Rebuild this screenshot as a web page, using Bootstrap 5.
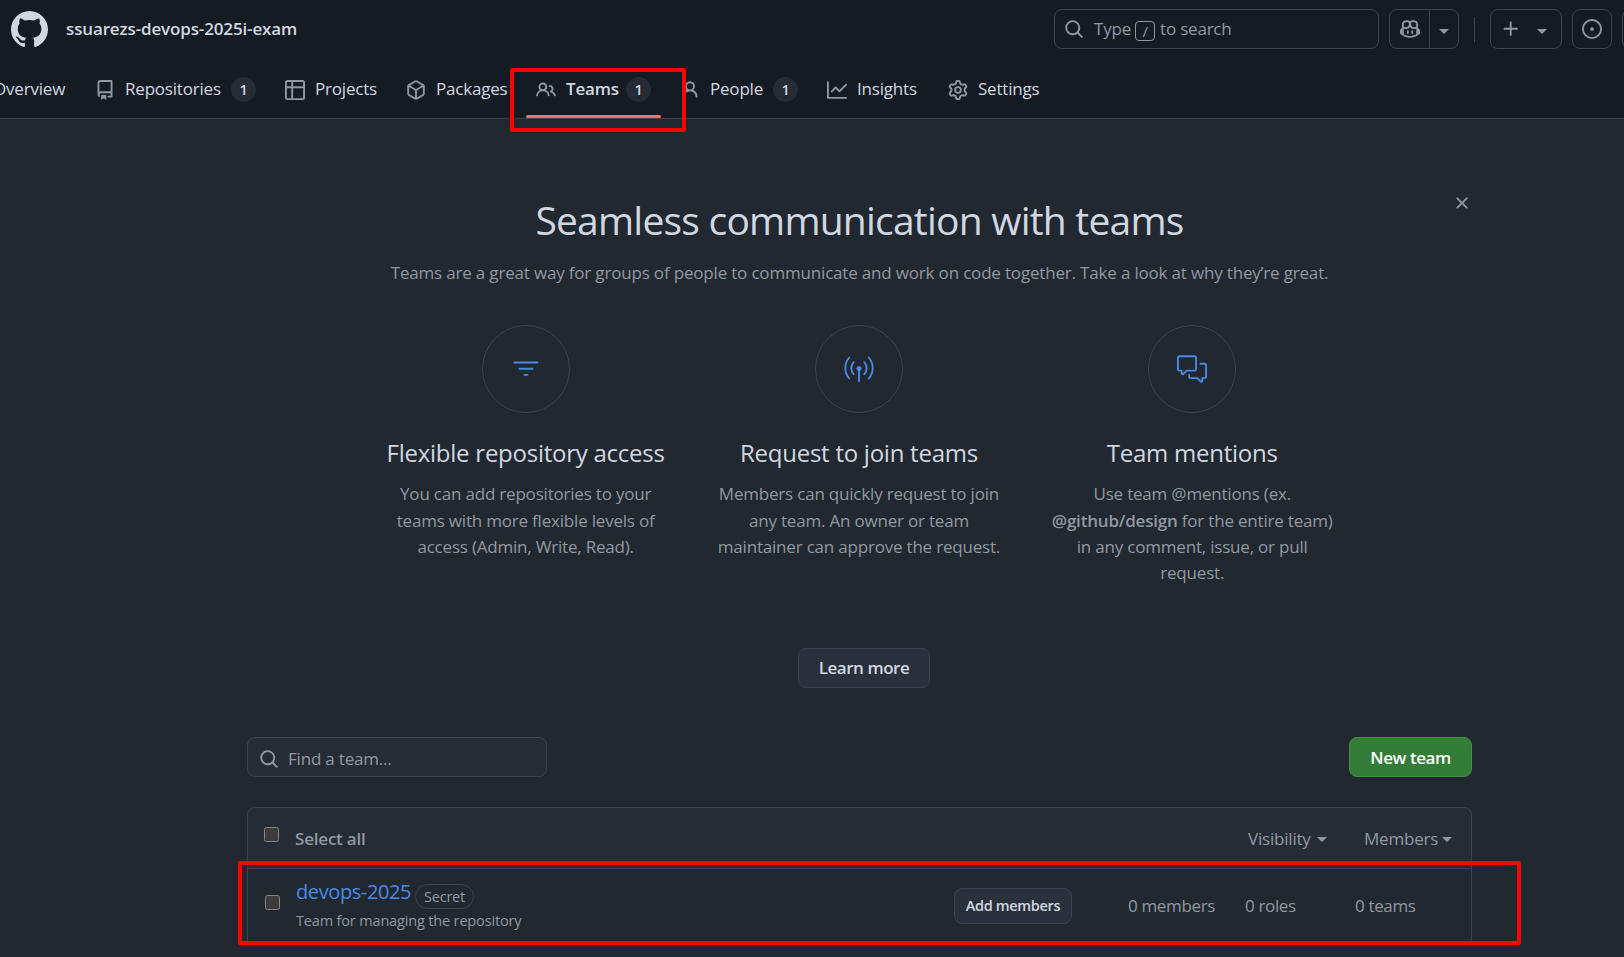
<!DOCTYPE html>
<html lang="en">
<head>
<meta charset="utf-8">
<title>Teams · ssuarezs-devops-2025i-exam</title>
<meta name="viewport" content="width=device-width, initial-scale=1">
<link href="https://cdn.jsdelivr.net/npm/bootstrap@5.3.0/dist/css/bootstrap.min.css" rel="stylesheet">
<style>
  :root { --line:#3d444d; --fg:#d1d7e0; --dim:#9198a1; --blue:#478be6; }
  body { background:#212830; color:var(--fg); font-family:"Open Sans","Noto Sans",sans-serif; font-size:17px; line-height:26.25px; letter-spacing:-.2px; height:957px; overflow:hidden; position:relative; }
  svg { fill:currentColor; display:block; flex:none; }
  .dim { color:var(--dim); }
  .semi { font-weight:600; }
  .site-head { background:#151b23; border-bottom:1px solid var(--line); height:119px; width:1624px; overflow:hidden; }
  .top-bar { height:58px; padding-left:10.5px; }
  .org-name { margin-left:18.5px; padding-top:1px; width:988px; letter-spacing:-.14px; }
  .tool { height:40px; border:1px solid var(--line); border-radius:8px; color:var(--dim); }
  .searchbox { width:325px; padding-left:9px; margin-right:10px; }
  .slash { border:1px solid var(--dim); border-radius:4px; width:20px; height:20px; line-height:18px; font-size:15px; margin:3px 5px 0 4px; }
  .copilot { width:70px; }
  .copilot > div { width:40px; border-right:1px solid var(--line); height:38px; }
  .bar-rule { width:1px; height:25px; background:var(--line); margin:0 15px; }
  .tabs { height:60px; margin-left:-7px; }
  .tabs > a { color:var(--fg); text-decoration:none; height:60px; padding-top:3px; flex:none; position:relative; }
  .tabs svg { color:var(--dim); margin-right:10px; }
  .count { background:#262c36; border-radius:13px; width:25px; height:25px; font-size:14.5px; line-height:25px; text-align:center; font-weight:600; margin-left:auto; margin-right:29px; }
  .tabs > a.current::after { content:""; position:absolute; left:-10px; right:19px; bottom:0; height:3px; background:#ec775c; border-radius:2px; }
  .w-overview { width:102px; } .w-repos { width:190px; } .w-projects { width:121px; } .w-packages { width:130px; }
  .w-teams { width:144px; } .w-people { width:147px; } .w-insights { width:121px; } .w-settings { width:110px; }
  .page { width:1225px; margin-left:247px; }
  .intro { height:618px; padding-top:76px; position:relative; }
  .intro h1 { font-size:39px; line-height:50px; font-weight:400; margin:0; letter-spacing:-.78px; }
  .intro-sub { margin:15px 0 0; letter-spacing:-.18px; }
  .closer { position:absolute; right:0; top:74px; }
  .features { width:1000px; margin:39px auto 0 112px; }
  .feature { width:333.3px; flex:none; padding:0 22px; }
  .disc { width:88px; height:88px; border:1px solid var(--line); border-radius:50%; color:var(--blue); }
  .feature h3 { font-size:24px; line-height:32px; font-weight:400; margin:24px -20px 12px; letter-spacing:-.25px; }
  .feature p { margin:0; }
  .gh-btn { border:1px solid var(--line); background:#2a313c; border-radius:8px; font-weight:600; color:var(--fg); padding:1px 0 0; letter-spacing:-.45px; font-size:17px; }
  .learn { width:132px; height:40px; position:absolute; left:551px; top:529px; }
  .find { width:300px; height:40px; background:#262c36; padding-left:11px; }
  .find span { margin-left:9px; }
  .newteam { width:123px; height:40px; background:#347d39; border-color:#468f4b; color:#fff; padding-top:3px; }
  .team-box { margin-top:30px; height:134px; border:1px solid var(--line); border-bottom:0; border-radius:8px 8px 0 0; overflow:hidden; }
  .team-head { background:#262c36; height:61px; border-bottom:1px solid var(--line); padding-left:16px; }
  .team-head span:not(.caret) { padding-top:2px; }
  .team-row { height:72px; padding-left:17px; }
  .tick { appearance:none; width:15px; height:15px; border:1px solid #858585; border-radius:2.5px; background:#3b3b3b; margin:0; flex:none; }
  .caret { width:0; height:0; border:5px solid transparent; border-top-color:currentColor; border-bottom:0; flex:none; }
  .team-name { color:var(--blue); font-size:20px; text-decoration:none; width:119px; letter-spacing:-.4px; margin-top:-2px; }
  .secret { border:1px solid var(--line); border-radius:13px; width:59px; height:25px; font-size:14.5px; line-height:23px; font-weight:500; text-align:center; margin-top:5px; }
  .team-info { width:658px; margin-left:16px; }
  .team-desc { font-size:14.5px; line-height:23px; letter-spacing:-.16px; }
  .addm { width:118px; height:36px; font-size:14.5px; margin:1px 56px 0 0; letter-spacing:-.35px; }
  .team-row > span { padding-top:2px; letter-spacing:-.35px; }
  .frame { position:absolute; border:4px solid #f00; border-radius:2px; }
  .frame-tab { left:509.5px; top:67.5px; width:176px; height:64px; }
  .frame-row { left:238px; top:861px; width:1283px; height:84px; }
</style>
</head>
<body>
<header class="site-head">
  <div class="top-bar d-flex align-items-center">
    <svg width="37" height="37" viewBox="0 0 16 16" color="#d1d7e0"><path d="M8 0c4.42 0 8 3.58 8 8a8.013 8.013 0 0 1-5.45 7.59c-.4.08-.55-.17-.55-.38 0-.27.01-1.13.01-2.2 0-.75-.25-1.23-.54-1.48 1.78-.2 3.65-.88 3.65-3.95 0-.88-.31-1.59-.82-2.15.08-.2.36-1.02-.08-2.12 0 0-.67-.22-2.2.82-.64-.18-1.32-.27-2-.27-.68 0-1.36.09-2 .27-1.53-1.03-2.2-.82-2.2-.82-.44 1.1-.16 1.92-.08 2.12-.51.56-.82 1.28-.82 2.15 0 3.06 1.86 3.75 3.64 3.95-.23.2-.44.55-.51 1.07-.46.21-1.61.55-2.33-.66-.15-.24-.6-.83-1.23-.82-.67.01-.27.38.01.53.34.19.73.9.82 1.13.16.45.68 1.31 2.69.94 0 .67.01 1.3.01 1.49 0 .21-.15.45-.55.38A7.995 7.995 0 0 1 0 8c0-4.42 3.58-8 8-8Z"/></svg>
    <div class="org-name semi flex-shrink-0">ssuarezs-devops-2025i-exam</div>
    <div class="tool searchbox d-flex align-items-center flex-shrink-0">
      <svg width="20" height="20" viewBox="0 0 16 16"><path d="M10.68 11.74a6 6 0 0 1-7.922-8.982 6 6 0 0 1 8.982 7.922l3.04 3.04a.749.749 0 0 1-.326 1.275.749.749 0 0 1-.734-.215ZM11.5 7a4.499 4.499 0 1 0-8.997 0A4.499 4.499 0 0 0 11.5 7Z"/></svg>
      <span style="margin-left:10px;padding-top:1px">Type</span><span class="slash text-center">/</span><span style="padding-top:1px">to search</span>
    </div>
    <div class="tool copilot d-flex align-items-center flex-shrink-0">
      <div class="d-flex align-items-center justify-content-center"><svg width="20" height="20" viewBox="0 0 16 16"><path d="M7.998 15.035c-4.562 0-7.873-2.914-7.998-3.749V9.338c.085-.628.677-1.686 1.588-2.065.013-.07.024-.143.036-.218.029-.183.06-.384.126-.612-.201-.508-.254-1.084-.254-1.656 0-.87.128-1.769.693-2.484.579-.733 1.494-1.124 2.724-1.261 1.206-.134 2.262.034 2.944.765.05.053.096.108.139.165.044-.057.094-.112.143-.165.682-.731 1.738-.899 2.944-.765 1.23.137 2.145.528 2.724 1.261.566.715.693 1.614.693 2.484 0 .572-.053 1.148-.254 1.656.066.228.098.429.126.612.012.076.024.148.037.218.924.385 1.522 1.471 1.591 2.095v1.872c0 .766-3.351 3.795-8.002 3.795Zm0-1.485c2.28 0 4.584-1.11 5.002-1.433V7.862l-.023-.116c-.49.21-1.075.291-1.727.291-1.146 0-2.059-.327-2.71-.991A3.222 3.222 0 0 1 8 6.303a3.24 3.24 0 0 1-.544.743c-.65.664-1.563.991-2.71.991-.652 0-1.236-.081-1.727-.291l-.023.116v4.255c.419.323 2.722 1.433 5.002 1.433ZM6.762 2.83c-.193-.206-.637-.413-1.682-.297-1.019.113-1.479.404-1.713.7-.247.312-.369.789-.369 1.554 0 .793.129 1.171.308 1.371.162.181.519.379 1.442.379.853 0 1.339-.235 1.638-.54.315-.322.527-.827.617-1.553.117-.935-.037-1.395-.241-1.614Zm4.155-.297c-1.044-.116-1.488.091-1.681.297-.204.219-.359.679-.242 1.614.091.726.303 1.231.618 1.553.299.305.784.54 1.638.54.922 0 1.28-.198 1.442-.379.179-.2.308-.578.308-1.371 0-.765-.123-1.242-.37-1.554-.233-.296-.693-.587-1.713-.7ZM6.25 9.037a.75.75 0 0 1 .75.75v1.501a.75.75 0 0 1-1.5 0V9.787a.75.75 0 0 1 .75-.75Zm4.25.75v1.501a.75.75 0 0 1-1.5 0V9.787a.75.75 0 0 1 1.5 0Z"/></svg></div>
      <span class="caret mx-auto mt-1"></span>
    </div>
    <div class="bar-rule flex-shrink-0"></div>
    <div class="tool d-flex align-items-center flex-shrink-0" style="width:72px">
      <svg width="20" height="20" viewBox="0 0 16 16" style="margin:0 16px 0 10px"><path d="M7.75 2a.75.75 0 0 1 .75.75V7h4.25a.75.75 0 0 1 0 1.5H8.5v4.25a.75.75 0 0 1-1.5 0V8.5H2.75a.75.75 0 0 1 0-1.5H7V2.75A.75.75 0 0 1 7.75 2Z"/></svg>
      <span class="caret mt-1"></span>
    </div>
    <div class="tool d-flex align-items-center justify-content-center flex-shrink-0" style="width:40px;margin-left:10px">
      <svg width="20" height="20" viewBox="0 0 16 16"><path d="M8 9.5a1.5 1.5 0 1 0 0-3 1.5 1.5 0 0 0 0 3Z"/><path d="M8 0a8 8 0 1 1 0 16A8 8 0 0 1 8 0ZM1.5 8a6.5 6.5 0 1 0 13 0 6.5 6.5 0 0 0-13 0Z"/></svg>
    </div>
    <div class="tool flex-shrink-0" style="width:40px;margin-left:10px"></div>
  </div>
  <nav class="tabs d-flex">
    <a class="w-overview d-flex align-items-center">Overview</a>
    <a class="w-repos d-flex align-items-center"><svg width="20" height="20" viewBox="0 0 16 16"><path d="M2 2.5A2.5 2.5 0 0 1 4.5 0h8.75a.75.75 0 0 1 .75.75v12.5a.75.75 0 0 1-.75.75h-2.5a.75.75 0 0 1 0-1.5h1.75v-2h-8a1 1 0 0 0-.714 1.7.75.75 0 1 1-1.072 1.05A2.495 2.495 0 0 1 2 11.5Zm10.5-1h-8a1 1 0 0 0-1 1v6.708A2.486 2.486 0 0 1 4.5 9h8ZM5 12.25a.25.25 0 0 1 .25-.25h3.5a.25.25 0 0 1 .25.25v3.25a.25.25 0 0 1-.4.2l-1.45-1.087a.249.249 0 0 0-.3 0L5.4 15.7a.25.25 0 0 1-.4-.2Z"/></svg>Repositories<span class="count">1</span></a>
    <a class="w-projects d-flex align-items-center"><svg width="20" height="20" viewBox="0 0 16 16"><path d="M0 1.75C0 .784.784 0 1.75 0h12.5C15.216 0 16 .784 16 1.75v12.5A1.75 1.75 0 0 1 14.25 16H1.75A1.75 1.75 0 0 1 0 14.25ZM6.5 6.5v8h7.75a.25.25 0 0 0 .25-.25V6.5Zm8-1.5V1.75a.25.25 0 0 0-.25-.25H6.5V5Zm-13 1.5v7.75c0 .138.112.25.25.25H5v-8ZM5 5V1.5H1.75a.25.25 0 0 0-.25.25V5Z"/></svg>Projects</a>
    <a class="w-packages d-flex align-items-center"><svg width="20" height="20" viewBox="0 0 16 16"><path d="m8.878.392 5.25 3.045c.54.314.872.89.872 1.514v6.098a1.75 1.75 0 0 1-.872 1.514l-5.25 3.045a1.75 1.75 0 0 1-1.756 0l-5.25-3.045A1.75 1.75 0 0 1 1 11.049V4.951c0-.624.332-1.201.872-1.514L7.122.392a1.75 1.75 0 0 1 1.756 0ZM7.875 1.69l-4.63 2.685L8 7.133l4.755-2.758-4.63-2.685a.248.248 0 0 0-.25 0ZM2.5 5.677v5.372c0 .09.047.171.125.216l4.625 2.683V8.432Zm6.25 8.271 4.625-2.683a.25.25 0 0 0 .125-.216V5.677L8.75 8.432Z"/></svg>Packages</a>
    <a class="w-teams current semi d-flex align-items-center"><svg width="20" height="20" viewBox="0 0 16 16"><path d="M2 5.5a3.5 3.5 0 1 1 5.898 2.549 5.508 5.508 0 0 1 3.034 4.084.75.75 0 1 1-1.482.235 4 4 0 0 0-7.9 0 .75.75 0 0 1-1.482-.236A5.507 5.507 0 0 1 3.102 8.05 3.493 3.493 0 0 1 2 5.5ZM11 4a3.001 3.001 0 0 1 2.22 5.018 5.01 5.01 0 0 1 2.56 3.012.749.749 0 0 1-.885.954.752.752 0 0 1-.549-.514 3.507 3.507 0 0 0-2.522-2.372.75.75 0 0 1-.574-.73v-.352a.75.75 0 0 1 .416-.672A1.5 1.5 0 0 0 11 5.5.75.75 0 0 1 11 4Zm-5.5-.5a2 2 0 1 0-.001 3.999A2 2 0 0 0 5.5 3.5Z"/></svg>Teams<span class="count">1</span></a>
    <a class="w-people d-flex align-items-center"><svg width="20" height="20" viewBox="0 0 16 16"><path d="M10.561 8.073a6.005 6.005 0 0 1 3.432 5.142.75.75 0 1 1-1.498.07 4.5 4.5 0 0 0-8.99 0 .75.75 0 0 1-1.498-.07 6.004 6.004 0 0 1 3.431-5.142 3.999 3.999 0 1 1 5.123 0ZM10.5 5a2.5 2.5 0 1 0-5 0 2.5 2.5 0 0 0 5 0Z"/></svg>People<span class="count">1</span></a>
    <a class="w-insights d-flex align-items-center"><svg width="20" height="20" viewBox="0 0 16 16"><path d="M1.5 1.75V13.5h13.75a.75.75 0 0 1 0 1.5H.75a.75.75 0 0 1-.75-.75V1.75a.75.75 0 0 1 1.5 0Zm14.28 2.53-5.25 5.25a.75.75 0 0 1-1.06 0L7 7.06 4.28 9.78a.751.751 0 0 1-1.042-.018.751.751 0 0 1-.018-1.042l3.25-3.25a.75.75 0 0 1 1.06 0L10 7.94l4.72-4.72a.751.751 0 0 1 1.042.018.751.751 0 0 1 .018 1.042Z"/></svg>Insights</a>
    <a class="w-settings d-flex align-items-center"><svg width="20" height="20" viewBox="0 0 16 16"><path d="M8 0a8.2 8.2 0 0 1 .701.031C9.444.095 9.99.645 10.16 1.29l.288 1.107c.018.066.079.158.212.224.231.114.454.243.668.386.123.082.233.09.299.071l1.103-.303c.644-.176 1.392.021 1.82.63.27.385.506.792.704 1.218.315.675.111 1.422-.364 1.891l-.814.806c-.049.048-.098.147-.088.294.016.257.016.515 0 .772-.01.147.038.246.088.294l.814.806c.475.469.679 1.216.364 1.891a7.977 7.977 0 0 1-.704 1.217c-.428.61-1.176.807-1.82.63l-1.102-.302c-.067-.019-.177-.011-.3.071a5.909 5.909 0 0 1-.668.386c-.133.066-.194.158-.211.224l-.29 1.106c-.168.646-.715 1.196-1.458 1.26a8.006 8.006 0 0 1-1.402 0c-.743-.064-1.289-.614-1.458-1.26l-.289-1.106c-.018-.066-.079-.158-.212-.224a5.738 5.738 0 0 1-.668-.386c-.123-.082-.233-.09-.299-.071l-1.103.303c-.644.176-1.392-.021-1.82-.63a8.12 8.12 0 0 1-.704-1.218c-.315-.675-.111-1.422.363-1.891l.815-.806c.05-.048.098-.147.088-.294a6.214 6.214 0 0 1 0-.772c.01-.147-.038-.246-.088-.294l-.815-.806C.635 6.045.431 5.298.746 4.623a7.92 7.92 0 0 1 .704-1.217c.428-.61 1.176-.807 1.82-.63l1.102.302c.067.019.177.011.3-.071.214-.143.437-.272.668-.386.133-.066.194-.158.211-.224l.29-1.106C6.009.645 6.556.095 7.299.03 7.53.01 7.764 0 8 0Zm-.571 1.525c-.036.003-.108.036-.137.146l-.289 1.105c-.147.561-.549.967-.998 1.189-.173.086-.34.183-.5.29-.417.278-.97.423-1.529.27l-1.103-.303c-.109-.03-.175.016-.195.045-.22.312-.412.644-.573.99-.014.031-.021.11.059.19l.815.806c.411.406.562.957.53 1.456a4.709 4.709 0 0 0 0 .582c.032.499-.119 1.05-.53 1.456l-.815.806c-.081.08-.073.159-.059.19.162.346.353.677.573.989.02.03.085.076.195.046l1.102-.303c.56-.153 1.113-.008 1.53.27.161.107.328.204.501.29.447.222.85.629.997 1.189l.289 1.105c.029.109.101.143.137.146a6.6 6.6 0 0 0 1.142 0c.036-.003.108-.036.137-.146l.289-1.105c.147-.561.549-.967.998-1.189.173-.086.34-.183.5-.29.417-.278.97-.423 1.529-.27l1.103.303c.109.029.175-.016.195-.045.22-.313.411-.644.573-.99.014-.031.021-.11-.059-.19l-.815-.806c-.411-.406-.562-.957-.53-1.456a4.709 4.709 0 0 0 0-.582c-.032-.499.119-1.05.53-1.456l.815-.806c.081-.08.073-.159.059-.19a6.464 6.464 0 0 0-.573-.989c-.02-.03-.085-.076-.195-.046l-1.102.303c-.56.153-1.113.008-1.53-.27a4.44 4.44 0 0 0-.501-.29c-.447-.222-.85-.629-.997-1.189l-.289-1.105c-.029-.11-.101-.143-.137-.146a6.6 6.6 0 0 0-1.142 0ZM11 8a3 3 0 1 1-6 0 3 3 0 0 1 6 0ZM9.5 8a1.5 1.5 0 1 0-3.001.001A1.5 1.5 0 0 0 9.5 8Z"/></svg>Settings</a>
  </nav>
</header>

<main class="page">
  <section class="intro text-center">
    <svg class="closer dim" width="20" height="20" viewBox="0 0 16 16"><path d="M3.72 3.72a.75.75 0 0 1 1.06 0L8 6.94l3.22-3.22a.749.749 0 0 1 1.275.326.749.749 0 0 1-.215.734L9.06 8l3.22 3.22a.749.749 0 0 1-.326 1.275.749.749 0 0 1-.734-.215L8 9.06l-3.22 3.22a.751.751 0 0 1-1.042-.018.751.751 0 0 1-.018-1.042L6.94 8 3.72 4.78a.75.75 0 0 1 0-1.06Z"/></svg>
    <h1>Seamless communication with teams</h1>
    <p class="intro-sub dim">Teams are a great way for groups of people to communicate and work on code together. Take a look at why they’re great.</p>
    <div class="features d-flex">
      <div class="feature">
        <div class="disc d-flex align-items-center justify-content-center mx-auto"><svg width="30" height="30" viewBox="0 0 24 24"><path d="M2.75 6a.75.75 0 0 0 0 1.5h18.5a.75.75 0 0 0 0-1.5H2.75ZM6 11.75a.75.75 0 0 1 .75-.75h10.5a.75.75 0 0 1 0 1.5H6.75a.75.75 0 0 1-.75-.75Zm4 4.938a.75.75 0 0 1 .75-.75h2.5a.75.75 0 0 1 0 1.5h-2.5a.75.75 0 0 1-.75-.75Z"/></svg></div>
        <h3>Flexible repository access</h3>
        <p class="dim">You can add repositories to your<br>teams with more flexible levels of<br>access (Admin, Write, Read).</p>
      </div>
      <div class="feature">
        <div class="disc d-flex align-items-center justify-content-center mx-auto"><svg width="30" height="30" viewBox="0 0 24 24"><path d="M12.75 13.43v8.32a.75.75 0 0 1-1.5 0v-8.32a2 2 0 1 1 1.5 0Z"/><g fill="none" stroke="currentColor" stroke-width="1.5" stroke-linecap="round"><path d="M4.2 2.8C-.05 7.8-.05 14.6 4.2 19.6M19.8 2.8c4.25 5 4.25 11.8 0 16.8M7.8 6.5c-2.6 2.7-2.6 7.1 0 9.8M16.2 6.5c2.6 2.7 2.6 7.1 0 9.8"/></g></svg></div>
        <h3>Request to join teams</h3>
        <p class="dim">Members can quickly request to join<br>any team. An owner or team<br>maintainer can approve the request.</p>
      </div>
      <div class="feature">
        <div class="disc d-flex align-items-center justify-content-center mx-auto"><svg width="30" height="30" viewBox="0 0 24 24"><path d="M1.75 1h12.5c.966 0 1.75.784 1.75 1.75v9.5A1.75 1.75 0 0 1 14.25 14H8.061l-2.574 2.573A1.458 1.458 0 0 1 3 15.543V14H1.75A1.75 1.75 0 0 1 0 12.25v-9.5C0 1.784.784 1 1.75 1ZM1.5 2.75v9.5c0 .138.112.25.25.25h2a.75.75 0 0 1 .75.75v2.19l2.72-2.72a.749.749 0 0 1 .53-.22h6.5a.25.25 0 0 0 .25-.25v-9.5a.25.25 0 0 0-.25-.25H1.75a.25.25 0 0 0-.25.25Z"/><path d="M22.5 8.75a.25.25 0 0 0-.25-.25h-3.5a.75.75 0 0 1 0-1.5h3.5c.966 0 1.75.784 1.75 1.75v9.5A1.75 1.75 0 0 1 22.25 20H21v1.543a1.457 1.457 0 0 1-2.487 1.03L15.939 20H10.75A1.75 1.75 0 0 1 9 18.25v-1.465a.75.75 0 0 1 1.5 0v1.465c0 .138.112.25.25.25h5.5a.75.75 0 0 1 .53.22l2.72 2.72v-2.19a.75.75 0 0 1 .75-.75h2a.25.25 0 0 0 .25-.25v-9.5Z"/></svg></div>
        <h3>Team mentions</h3>
        <p class="dim">Use team @mentions (ex.<br><span class="semi">@github/design</span> for the entire team)<br>in any comment, issue, or pull<br>request.</p>
      </div>
    </div>
    <button class="gh-btn learn">Learn more</button>
  </section>

  <div class="d-flex justify-content-between">
    <div class="tool find d-flex align-items-center">
      <svg class="mt-1" width="20" height="20" viewBox="0 0 16 16"><path d="M10.68 11.74a6 6 0 0 1-7.922-8.982 6 6 0 0 1 8.982 7.922l3.04 3.04a.749.749 0 0 1-.326 1.275.749.749 0 0 1-.734-.215ZM11.5 7a4.499 4.499 0 1 0-8.997 0A4.499 4.499 0 0 0 11.5 7Z"/></svg>
      <span class="pt-1">Find a team...</span>
    </div>
    <button class="gh-btn newteam">New team</button>
  </div>

  <div class="team-box">
    <div class="team-head d-flex align-items-center dim">
      <input type="checkbox" class="tick mb-2">
      <span class="semi ms-3" style="width:953px">Select all</span>
      <span style="width:69px">Visibility</span><span class="caret" style="margin:3px 37px 0 0"></span>
      <span style="width:78px">Members</span><span class="caret" style="margin-top:3px"></span>
    </div>
    <div class="team-row d-flex align-items-center dim">
      <input type="checkbox" class="tick" style="margin-bottom:5px">
      <div class="team-info">
        <div class="d-flex align-items-center"><a class="team-name">devops-2025</a><span class="secret">Secret</span></div>
        <div class="team-desc">Team for managing the repository</div>
      </div>
      <button class="gh-btn addm">Add members</button>
      <span style="width:117px">0 members</span>
      <span style="width:110px">0 roles</span>
      <span>0 teams</span>
    </div>
  </div>
</main>

<div class="frame frame-tab"></div>
<div class="frame frame-row"></div>
<script src="https://cdn.jsdelivr.net/npm/bootstrap@5.3.0/dist/js/bootstrap.bundle.min.js"></script>
</body>
</html>
